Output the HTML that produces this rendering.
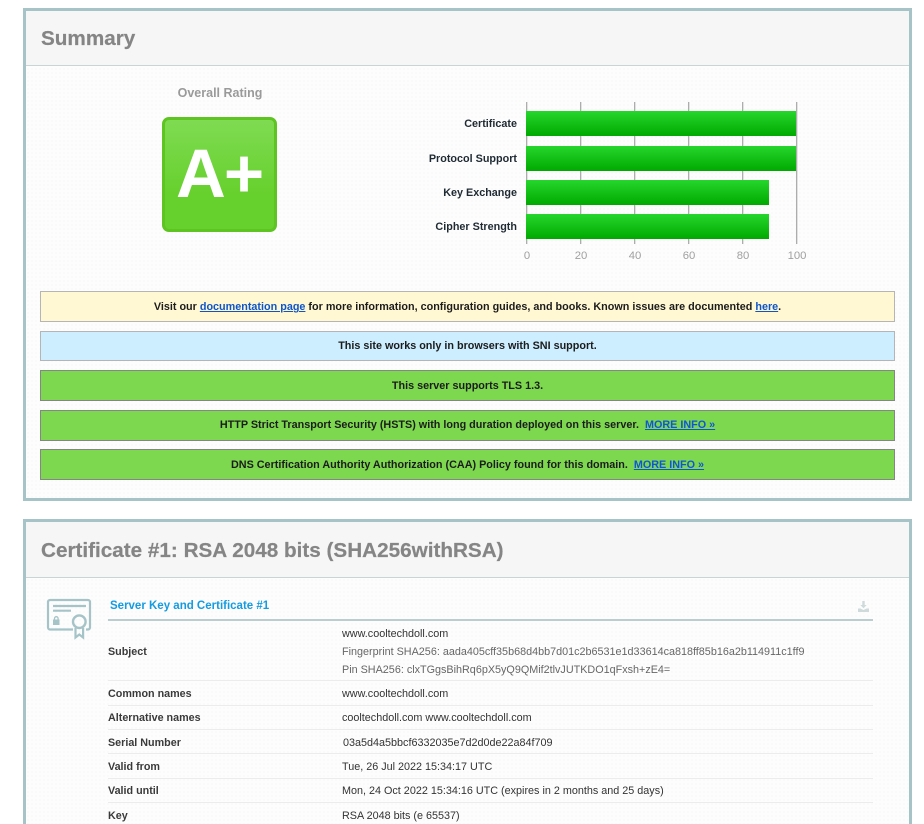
<!DOCTYPE html>
<html><head><meta charset="utf-8">
<style>
html,body{margin:0;padding:0;background:#fff;}
body{width:924px;height:824px;overflow:hidden;position:relative;font-family:"Liberation Sans",Arial,sans-serif;}
#w{position:absolute;left:0;top:0;width:924px;height:824px;overflow:hidden;}
.abs,.t{position:absolute;}
.t{white-space:nowrap;font-size:10.8px;line-height:14px;}
.panel{position:absolute;left:23px;width:883px;border:3px solid #a6c4c8;background-color:#fdfdfd;background-image:radial-gradient(#f5f5f5 .7px,transparent .8px);background-size:4px 4px;}
.head{position:absolute;left:0;top:0;right:0;background:#f6f6f6;border-bottom:1px solid #c9d4d5;}
.h{position:absolute;left:15px;font-weight:bold;font-size:20.7px;color:#858585;white-space:nowrap;line-height:26px;-webkit-text-stroke:.2px #858585;}
.bar{position:absolute;left:526px;height:25px;background:linear-gradient(#26d62c,#00a900);}
.grid{position:absolute;top:102px;width:1px;height:142px;background:#adadad;box-shadow:1px 0 0 #e2e2e2;}
.lab{position:absolute;right:407px;font-size:10.8px;font-weight:bold;color:#1f2a33;line-height:14px;white-space:nowrap;}
.tick{position:absolute;top:249px;width:30px;text-align:center;font-size:11.3px;line-height:14px;color:#a0a0a0;}
.box{position:absolute;left:40px;width:853px;text-align:center;font-size:10.8px;font-weight:bold;color:#1c1c1c;white-space:nowrap;}
.box a{color:#0e55cc;text-decoration:underline;}
.box.g{background:#7dd84f;border:1px solid #858585;height:29px;line-height:29px;}
.box.g a{color:#0f55d8;}
.k{position:absolute;left:108px;font-weight:bold;font-size:10.75px;color:#3a3a3a;line-height:14px;white-space:nowrap;}
.v{position:absolute;left:342px;font-size:10.8px;color:#333;line-height:14px;white-space:nowrap;}
.sep{position:absolute;left:108px;width:765px;height:1px;background:#ececec;}
</style></head>
<body>
<div id="w">
<div class="panel" style="top:8px;height:487px;">
  <div class="head" style="height:54px;"></div>
  <div class="h" style="top:15px;">Summary</div>
</div>
<div class="t" style="left:120px;width:200px;text-align:center;top:86px;font-size:12.5px;line-height:15px;font-weight:bold;color:#9a9a9a;">Overall Rating</div>
<div class="abs" style="left:162px;top:117px;width:109px;height:109px;border:3px solid #5dc421;border-radius:7px;background:linear-gradient(#7fdb52,#66d02c 70%);"></div>
<div class="abs" style="left:176px;top:148px;color:#fff;font-weight:bold;font-size:69px;line-height:52px;letter-spacing:-2px;white-space:nowrap;">A+</div>

<div class="grid" style="left:526px"></div><div class="grid" style="left:580px"></div><div class="grid" style="left:634px"></div><div class="grid" style="left:688px"></div><div class="grid" style="left:742px"></div><div class="grid" style="left:796px"></div>
<div class="bar" style="top:111px;width:270px"></div>
<div class="bar" style="top:146px;width:270px"></div>
<div class="bar" style="top:180px;width:243px"></div>
<div class="bar" style="top:214px;width:243px"></div>
<div class="lab" style="top:117px">Certificate</div>
<div class="lab" style="top:152px">Protocol Support</div>
<div class="lab" style="top:186px">Key Exchange</div>
<div class="lab" style="top:220px">Cipher Strength</div>
<div class="tick" style="left:512px">0</div><div class="tick" style="left:566px">20</div><div class="tick" style="left:620px">40</div><div class="tick" style="left:674px">60</div><div class="tick" style="left:728px">80</div><div class="tick" style="left:782px">100</div>

<div class="box" style="top:291px;height:29px;line-height:30px;background:#fff8d3;border:1px solid #b5b5b5;">Visit our <a>documentation page</a> for more information, configuration guides, and books. Known issues are documented <a>here</a>.</div>
<div class="box" style="top:331px;height:28px;line-height:28px;background:#cdeeff;border:1px solid #b5b5b5;">This site works only in browsers with SNI support.</div>
<div class="box g" style="top:370px;line-height:31px;">This server supports TLS 1.3.</div>
<div class="box g" style="top:410px;">HTTP Strict Transport Security (HSTS) with long duration deployed on this server. &nbsp;<a>MORE INFO »</a></div>
<div class="box g" style="top:449px;line-height:31px;">DNS Certification Authority Authorization (CAA) Policy found for this domain. &nbsp;<a>MORE INFO »</a></div>

<div class="panel" style="top:519px;height:320px;">
  <div class="head" style="height:55px;"></div>
  <div class="h" style="top:16px;">Certificate #1: RSA 2048 bits (SHA256withRSA)</div>
</div>

<svg class="abs" style="left:46px;top:598px" width="48" height="42" viewBox="0 0 48 42" fill="none" stroke="#a6c4c8" stroke-width="2.200">
  <path d="M27 31.500H4a2 2 0 0 1-2-2V4a2 2 0 0 1 2-2h38a2 2 0 0 1 2 2v25.500a2 2 0 0 1-2 2h-2"/>
  <path d="M7 8H40M7 12.700H25" />
  <circle cx="33.300" cy="23.700" r="6.300" stroke-width="2.400"/>
  <path d="M29.500 30v9.500l3.800-3 3.800 3V30" stroke-width="2.200"/>
  <rect x="7" y="21.500" width="6.500" height="5.500" fill="#a6c4c8" stroke="none"/>
  <path d="M8.500 22v-1.500a1.800 1.800 0 0 1 3.600 0V22" stroke-width="1.300"/>
</svg>

<div class="t" style="left:110px;top:599px;font-size:11.500px;font-weight:bold;color:#159be0;">Server Key and Certificate #1</div>
<div class="abs" style="left:108px;top:619px;width:765px;height:2px;background:#bccdd0;"></div>
<svg class="abs" style="left:858px;top:601px" width="11" height="11" viewBox="0 0 11 11" fill="#cfdadb"><path d="M4.300 0h2.400v4h2L5.500 7.300 2.300 4h2zM0 7.500h2.500l3 1.500 3-1.500H11V11H0z"/></svg>

<div class="v" style="top:627px;">www.cooltechdoll.com</div>
<div class="k" style="top:645px;">Subject</div>
<div class="v" style="top:645px;color:#666;">Fingerprint SHA256: aada405cff35b68d4bb7d01c2b6531e1d33614ca818ff85b16a2b114911c1ff9</div>
<div class="v" style="top:663px;color:#666;">Pin SHA256: clxTGgsBihRq6pX5yQ9QMif2tlvJUTKDO1qFxsh+zE4=</div>
<div class="sep" style="top:680px"></div>
<div class="k" style="top:687px;">Common names</div><div class="v" style="top:687px;">www.cooltechdoll.com</div>
<div class="sep" style="top:705px"></div>
<div class="k" style="top:711px;">Alternative names</div><div class="v" style="top:711px;">cooltechdoll.com www.cooltechdoll.com</div>
<div class="sep" style="top:729px"></div>
<div class="k" style="top:736px;left:108px;">Serial Number</div><div class="v" style="top:736px;left:343px;">03a5d4a5bbcf6332035e7d2d0de22a84f709</div>
<div class="sep" style="top:753px"></div>
<div class="k" style="top:760px;">Valid from</div><div class="v" style="top:760px;">Tue, 26 Jul 2022 15:34:17 UTC</div>
<div class="sep" style="top:778px"></div>
<div class="k" style="top:784px;">Valid until</div><div class="v" style="top:784px;">Mon, 24 Oct 2022 15:34:16 UTC (expires in 2 months and 25 days)</div>
<div class="sep" style="top:802px"></div>
<div class="k" style="top:809px;">Key</div><div class="v" style="top:809px;">RSA 2048 bits (e 65537)</div>
</div>
</body></html>
